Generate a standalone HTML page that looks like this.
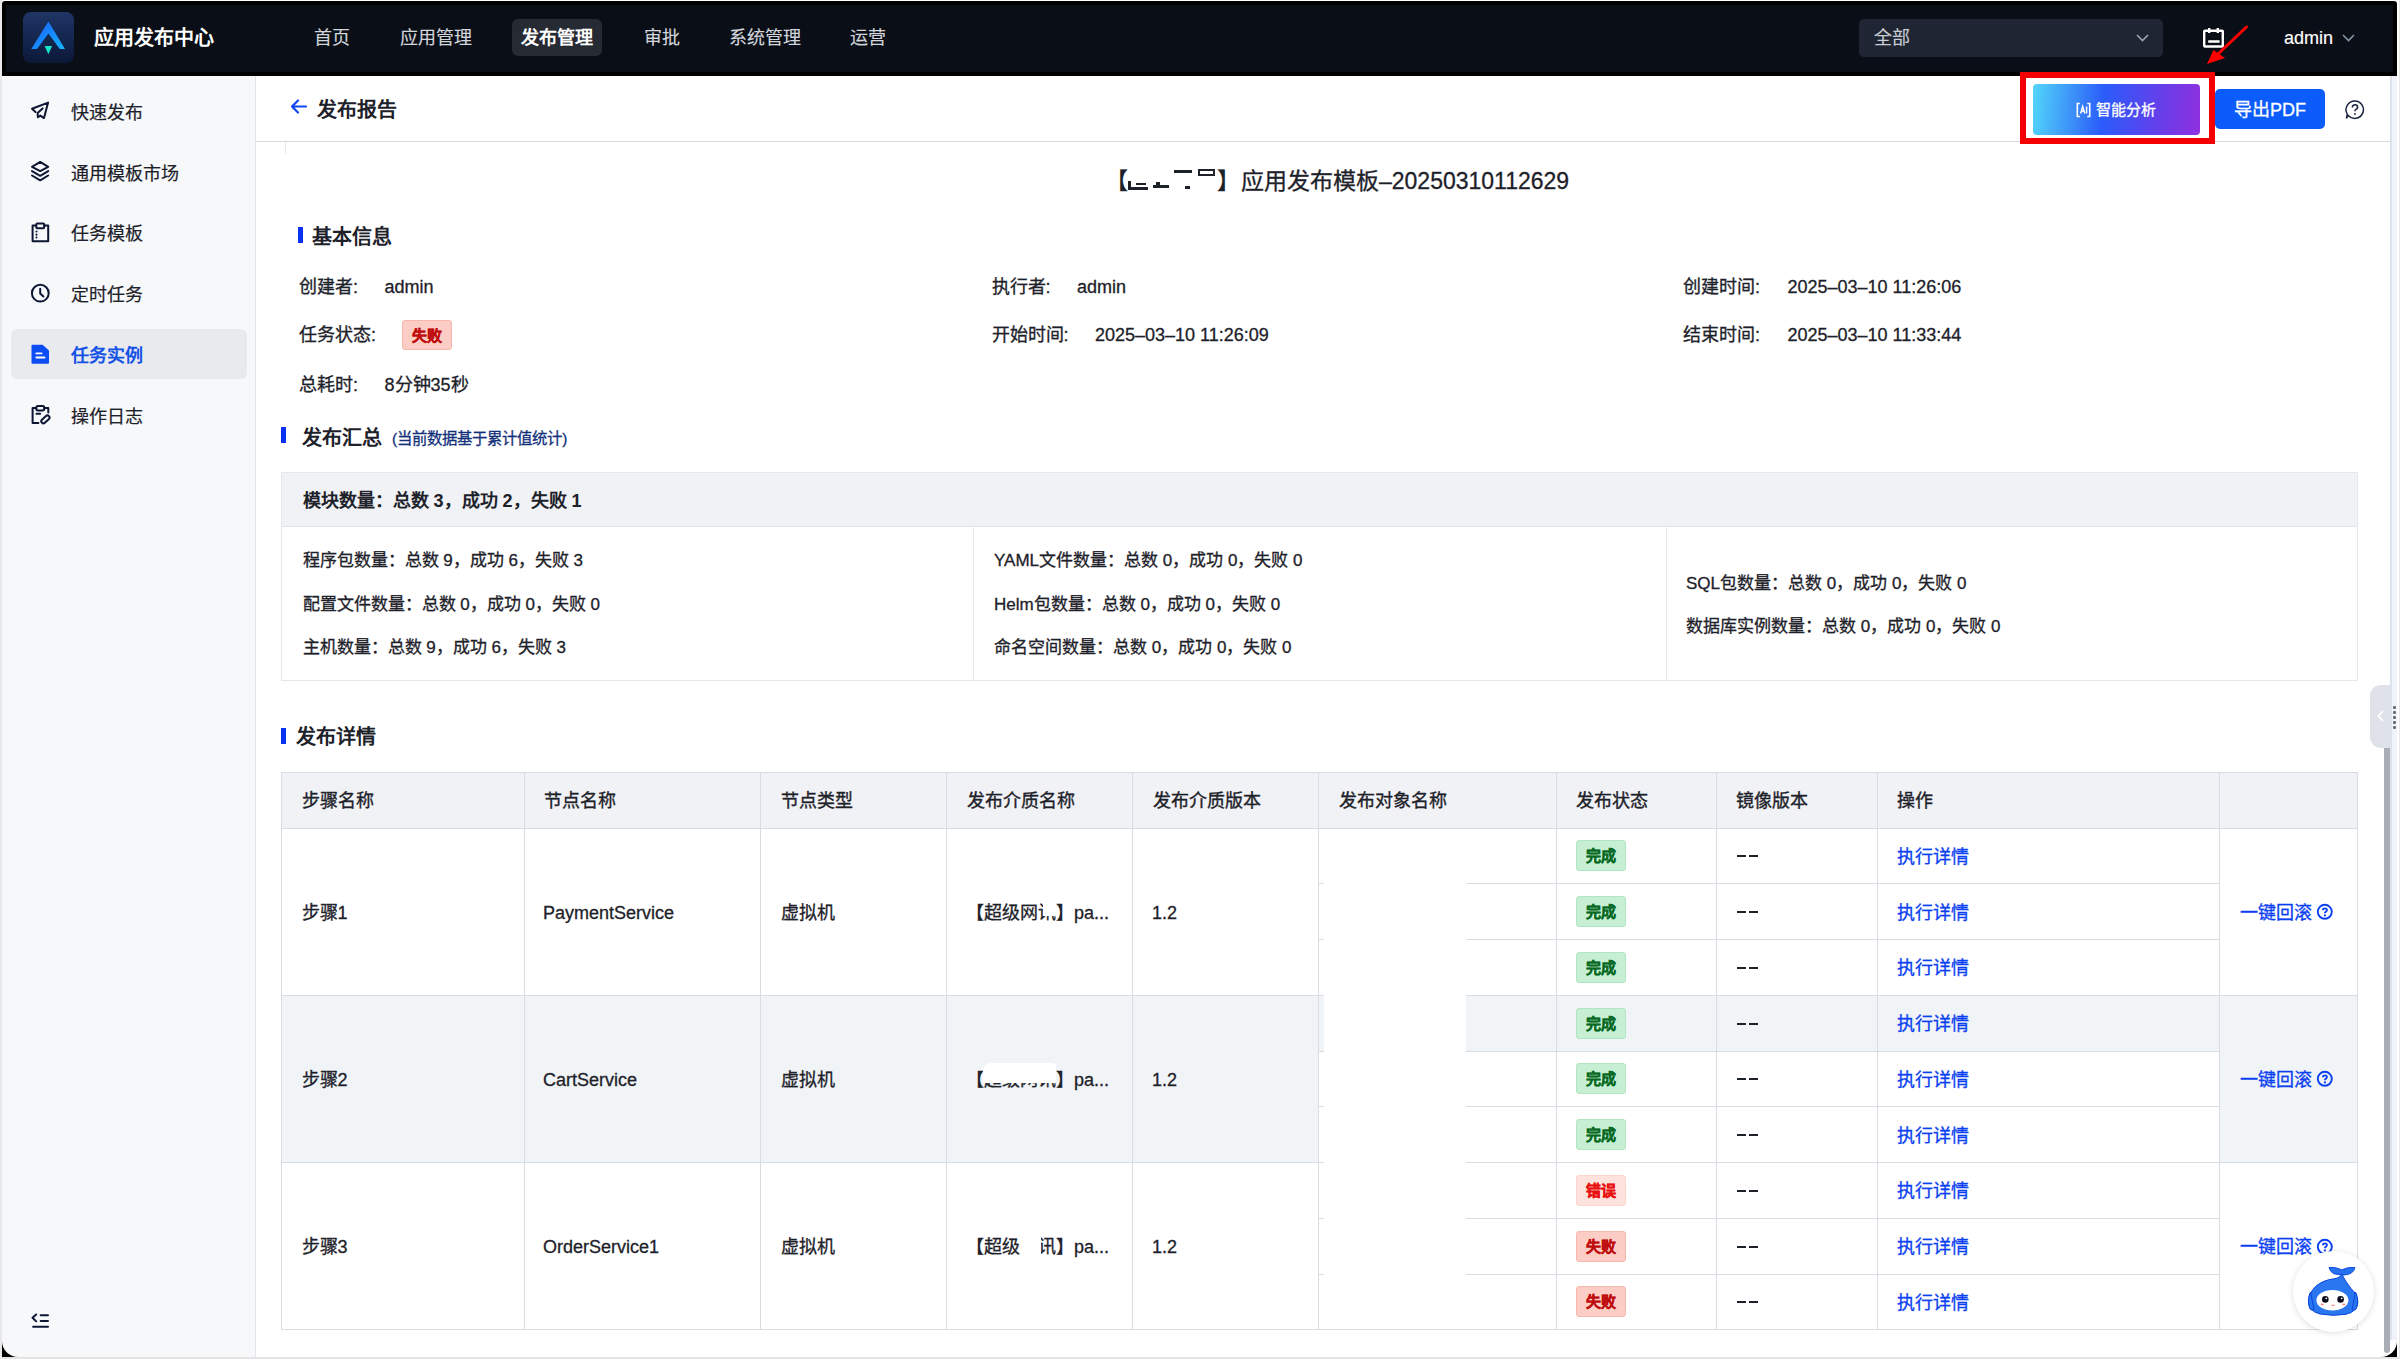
<!DOCTYPE html>
<html lang="zh-CN"><head><meta charset="utf-8">
<style>
*{margin:0;padding:0;box-sizing:border-box}
html,body{width:2400px;height:1359px;overflow:hidden;background:#fff;font-family:"Liberation Sans",sans-serif;color:#1d2129}
.a{position:absolute}
.t{position:absolute;white-space:nowrap;line-height:20px;font-size:18px;-webkit-text-stroke-width:0.3px}
.nav{position:absolute;top:28px;font-size:18px;color:#d3d6dc;line-height:20px;white-space:nowrap;-webkit-text-stroke-width:0.15px}
.si{position:absolute;left:71px;font-size:18px;color:#1d2129;line-height:20px;white-space:nowrap;-webkit-text-stroke-width:0.2px}
.ic{position:absolute;left:24px}
.h{position:absolute;white-space:nowrap;line-height:20px;font-size:18px;color:#1d2129;-webkit-text-stroke-width:0.3px}
.bar{position:absolute;width:5px;height:16px;background:#1146f0}
.sum{position:absolute;white-space:nowrap;line-height:20px;font-size:17px;color:#1d2129}
.tb{position:absolute;white-space:nowrap;line-height:20px;font-size:18px;color:#1d2129}
.bd{position:absolute;width:50px;height:30px;border-radius:3px;font-size:15px;font-weight:bold;line-height:30px;text-align:center;-webkit-text-stroke-width:0.35px}
.ok{background:#c6efd3;color:#086a24;border:1px solid #b2e6c2}
.er{background:#fde2dd;color:#e81010;border:1px solid #fbd4cc}
.fl{background:#fccdc4;color:#bf0c0c;border:1px solid #f7b8ac}
.lk{position:absolute;white-space:nowrap;line-height:20px;font-size:18px;color:#1456e6}
.hl{position:absolute;height:1px;background:#dde1e7}
.vl{position:absolute;width:1px;background:#dde1e7}
[style*="font-weight:bold"]{-webkit-text-stroke-width:0}
</style></head><body>
<!-- window frame -->
<div class="a" style="left:2px;top:1px;width:2395px;height:1356px;background:#000;border-radius:3px 3px 0 0"></div>
<div class="a" style="left:6px;top:5px;width:2387px;height:67px;background:#0a0e16"></div>
<!-- logo -->
<svg class="a" style="left:23px;top:12px" width="51" height="51" viewBox="0 0 51 51">
<defs><linearGradient id="lg" x1="0" y1="0" x2="0" y2="1"><stop offset="0" stop-color="#1f3566"/><stop offset="1" stop-color="#0b1838"/></linearGradient>
<linearGradient id="lg2" x1="0" y1="0" x2="1" y2="1"><stop offset="0" stop-color="#1a5cff"/><stop offset="1" stop-color="#14b4ff"/></linearGradient></defs>
<rect x="0" y="0" width="51" height="51" rx="8" fill="url(#lg)"/>
<path d="M25.4 9.6 L8.3 37 L14 37 L25.4 21.5 L36.8 37 L42 37 Z" fill="url(#lg2)"/>
<path d="M21.6 34 L29.1 34 L25.4 42.3 Z" fill="#19e3c8"/>
</svg>
<div class="t" style="left:94px;top:28px;font-size:20px;font-weight:bold;color:#fff">应用发布中心</div>
<div class="a" style="left:512px;top:19px;width:90px;height:37px;background:#262a33;border-radius:6px"></div>
<div class="nav" style="left:314px">首页</div>
<div class="nav" style="left:400px">应用管理</div>
<div class="nav" style="left:521px;color:#fff;font-weight:bold">发布管理</div>
<div class="nav" style="left:644px">审批</div>
<div class="nav" style="left:729px">系统管理</div>
<div class="nav" style="left:850px">运营</div>
<div class="a" style="left:1859px;top:19px;width:304px;height:38px;background:#1f2532;border-radius:5px"></div>
<div class="nav" style="left:1874px;color:#c9cdd4">全部</div>
<svg class="a" style="left:2134px;top:32px" width="17" height="12" viewBox="0 0 17 12"><path d="M3 3 L8.5 8.5 L14 3" stroke="#9aa3b2" stroke-width="1.6" fill="none"/></svg>
<svg class="a" style="left:2200px;top:26px" width="28" height="24" viewBox="0 0 28 24"><rect x="4.2" y="4.7" width="18.6" height="15.8" rx="0.8" stroke="#fff" stroke-width="2.4" fill="none"/><path d="M9.2 2 V7 M17.8 2 V7 M8.2 15.5 H19.6" stroke="#fff" stroke-width="2.4"/></svg>
<div class="nav" style="left:2284px;top:28px;color:#fff">admin</div>
<svg class="a" style="left:2340px;top:32px" width="17" height="12" viewBox="0 0 17 12"><path d="M3 3 L8.5 8.5 L14 3" stroke="#8893a6" stroke-width="1.6" fill="none"/></svg>
<!-- red arrow -->
<svg class="a" style="left:2200px;top:20px" width="56" height="50" viewBox="0 0 56 50"><path d="M46.5 7 L19 33" stroke="#f00" stroke-width="3" stroke-linecap="round"/><path d="M7 44 L13.5 30 L25 38 Z" fill="#f00"/></svg>
<!-- sidebar -->
<div class="a" style="left:2px;top:76px;width:254px;height:1281px;background:#f7f8fa;border-right:1px solid #e1e4ea;border-bottom-left-radius:16px"></div>
<div class="a" style="left:11px;top:329px;width:236px;height:50px;background:#e8eaee;border-radius:6px"></div>
<svg class="ic" style="top:96px" width="32" height="32" viewBox="0 0 32 32" fill="none" stroke="#0d1634" stroke-width="2" stroke-linejoin="round" stroke-linecap="round"><path d="M11.5 16 L8 12.8 L24.1 6.6 L20 22.1 L16.3 19.6 L13.9 21.3 L13.6 17 L18.6 12.4"/></svg>
<svg class="ic" style="top:156px" width="32" height="32" viewBox="0 0 32 32" fill="none" stroke="#0d1634" stroke-width="2" stroke-linejoin="round" stroke-linecap="round"><path d="M8 10.8 L16.2 5.9 L24.2 10.8 L16.2 15.1 Z M8 15.1 L16.2 19.8 L24.2 15.1 M8 19.5 L16.2 24.3 L24.2 19.5"/></svg>
<svg class="ic" style="top:216px" width="32" height="32" viewBox="0 0 32 32" fill="none" stroke="#0d1634" stroke-width="2" stroke-linejoin="round" stroke-linecap="round"><path d="M12.2 9.5 H8.6 V25.2 H24.2 V9.5 H20.2"/><rect x="12.3" y="7.6" width="7.9" height="4.6" rx="1"/><path d="M12.5 15.5 V15.6 M12.5 18.6 V18.7 M12.5 21.4 V21.5"/></svg>
<svg class="ic" style="top:277px" width="32" height="32" viewBox="0 0 32 32" fill="none" stroke="#0d1634" stroke-width="2" stroke-linejoin="round" stroke-linecap="round"><circle cx="16.3" cy="16.2" r="8.4"/><path d="M16.2 11.8 V16.6 L19.4 19.5"/></svg>
<svg class="ic" style="top:338px" width="32" height="32" viewBox="0 0 32 32"><path d="M8.5 6.8 H18.6 L25 12.5 V24.8 Q25 25.7 24 25.7 H8.5 Q7.5 25.7 7.5 24.7 V7.8 Q7.5 6.8 8.5 6.8 Z" fill="#0b4cf5"/><path d="M12.3 15.4 H17.6 M12.3 19.5 H20.6" stroke="#fff" stroke-width="1.8" stroke-linecap="round"/></svg>
<svg class="ic" style="top:399px" width="32" height="32" viewBox="0 0 32 32" fill="none" stroke="#0d1634" stroke-width="2" stroke-linejoin="round" stroke-linecap="round"><path d="M14.4 24 H8.6 V9 H12.4 M20.2 9 H24.3 V13.6"/><rect x="12.3" y="7" width="8" height="4.4" rx="1.6"/><path d="M12.5 14.7 H16.2"/><rect x="16.6" y="18.3" width="9.6" height="4.2" rx="2.1" transform="rotate(-42 21.4 20.4)"/></svg>
<div class="si" style="top:103px">快速发布</div>
<div class="si" style="top:164px">通用模板市场</div>
<div class="si" style="top:224px">任务模板</div>
<div class="si" style="top:285px">定时任务</div>
<div class="si" style="top:346px;color:#1553e6;font-weight:bold">任务实例</div>
<div class="si" style="top:407px">操作日志</div>
<svg class="a" style="left:24px;top:1304px" width="32" height="32" viewBox="0 0 32 32" fill="none" stroke="#0d1634" stroke-width="2" stroke-linecap="round" stroke-linejoin="round"><path d="M12.2 10.5 L8.5 13.8 L12.2 17.4 M16.7 11.2 H24 M16.7 17 H24 M9.1 22.8 H24"/></svg>

<!-- main -->
<div class="a" style="left:256px;top:76px;width:2134px;height:1281px;background:#fff"></div>
<div class="hl" style="left:256px;top:141px;width:2134px;background:#d3d8e1"></div>
<div class="vl" style="left:285px;top:142px;height:12px;background:#e4e7ec"></div>
<svg class="a" style="left:288px;top:97px" width="22" height="20" viewBox="0 0 22 20"><path d="M18 9.5 H4 M10 3.5 L4 9.5 L10 15.5" stroke="#1146f0" stroke-width="2.2" fill="none" stroke-linecap="round" stroke-linejoin="round"/></svg>
<div class="h" style="left:317px;top:100px;font-size:20px;font-weight:bold">发布报告</div>

<!-- red box + buttons -->
<div class="a" style="left:2020px;top:72px;width:195px;height:72px;border:6px solid #f50000"></div>
<div class="a" style="left:2033px;top:84px;width:167px;height:51px;border-radius:4px;background:linear-gradient(95deg,#52d6fb 0%,#3b8ef8 25%,#2b5cfb 42%,#4a4cf2 60%,#6a3de8 78%,#9030de 100%)"></div>
<svg class="a" style="left:2076px;top:102px" width="16" height="16" viewBox="0 0 16 16" fill="none" stroke="#fff" stroke-width="1.6"><path d="M3.8 1.5 H1.3 V14.5 H3.8 M11.2 1.5 H13.7 V14.5 H11.2"/><path d="M4.6 11.5 L6.7 4.5 L8.8 11.5 M5.3 9.2 H8.1 M10.6 4.5 V11.5" stroke-width="1.5"/></svg>
<div class="h" style="left:2096px;top:100px;font-size:15px;color:#fff;-webkit-text-stroke:0.3px #fff">智能分析</div>
<div class="a" style="left:2215px;top:89px;width:110px;height:40px;border-radius:5px;background:#0b5cfb"></div>
<div class="h" style="left:2234px;top:100px;color:#fff;-webkit-text-stroke:0.3px #fff">导出PDF</div>
<svg class="a" style="left:2344px;top:99px" width="22" height="22" viewBox="0 0 22 22" fill="none" stroke="#1b2440" stroke-width="1.5"><path d="M11 2 A8.7 8.7 0 1 1 4.2 16.5 L2.4 19.4 L3.3 15.2 A8.7 8.7 0 0 1 11 2 Z"/><path d="M8.4 8.6 Q8.4 5.8 11 5.8 Q13.6 5.8 13.6 8.2 Q13.6 9.6 11.9 10.4 Q11 10.9 11 12.3" stroke-width="1.6"/><circle cx="11" cy="15" r="0.9" fill="#1b2440" stroke="none"/></svg>


<div class="t" style="left:1105px;top:169.5px;font-size:23px;line-height:23px;-webkit-text-stroke:0.3px #1d2129">【</div>
<div class="t" style="left:1217px;top:169.5px;font-size:23px;line-height:23px;-webkit-text-stroke:0.3px #1d2129">】</div>
<div class="t" style="left:1241px;top:169.5px;font-size:23px;line-height:23px;-webkit-text-stroke:0.3px #1d2129">应用发布模板–20250310112629</div>
<div class="a" style="left:1128px;top:181px;width:3px;height:9px;background:#1d2129;"></div>
<div class="a" style="left:1131px;top:187px;width:17px;height:2.5px;background:#1d2129;"></div>
<div class="a" style="left:1136px;top:183px;width:10px;height:2px;background:#1d2129;"></div>
<div class="a" style="left:1153px;top:185px;width:16px;height:3px;background:#1d2129;"></div>
<div class="a" style="left:1156px;top:182px;width:4px;height:4px;background:#1d2129;"></div>
<div class="a" style="left:1174px;top:170px;width:18px;height:2.5px;background:#1d2129;"></div>
<div class="a" style="left:1198px;top:169px;width:17px;height:2px;background:#1d2129;"></div>
<div class="a" style="left:1198px;top:169px;width:2px;height:7px;background:#1d2129;"></div>
<div class="a" style="left:1213px;top:169px;width:2px;height:7px;background:#1d2129;"></div>
<div class="a" style="left:1198px;top:174px;width:17px;height:2px;background:#1d2129;"></div>
<div class="a" style="left:1185px;top:186px;width:5px;height:3px;background:#1d2129;"></div>
<div class="a" style="left:298px;top:227px;width:5px;height:16px;background:#0a30f2;"></div>
<div class="t" style="left:312px;top:227.0px;font-size:20px;line-height:20px;font-weight:bold">基本信息</div>
<div class="t" style="left:299px;top:277.0px;font-size:18px;line-height:20px">创建者:</div>
<div class="t" style="left:384.5px;top:277.0px;font-size:18px;line-height:20px">admin</div>
<div class="t" style="left:991.5px;top:277.0px;font-size:18px;line-height:20px">执行者:</div>
<div class="t" style="left:1077px;top:277.0px;font-size:18px;line-height:20px">admin</div>
<div class="t" style="left:1683px;top:277.0px;font-size:18px;line-height:20px">创建时间:</div>
<div class="t" style="left:1787.5px;top:277.0px;font-size:18px;line-height:20px">2025–03–10 11:26:06</div>
<div class="t" style="left:299px;top:325.0px;font-size:18px;line-height:20px">任务状态:</div>
<div class="t" style="left:991.5px;top:325.0px;font-size:18px;line-height:20px">开始时间:</div>
<div class="t" style="left:1095px;top:325.0px;font-size:18px;line-height:20px">2025–03–10 11:26:09</div>
<div class="t" style="left:1683px;top:325.0px;font-size:18px;line-height:20px">结束时间:</div>
<div class="t" style="left:1787.5px;top:325.0px;font-size:18px;line-height:20px">2025–03–10 11:33:44</div>
<div class="t" style="left:299px;top:375.0px;font-size:18px;line-height:20px">总耗时:</div>
<div class="t" style="left:384.5px;top:375.0px;font-size:18px;line-height:20px">8分钟35秒</div>
<div class="bd fl" style="left:402px;top:320px">失败</div>
<div class="a" style="left:281px;top:427px;width:5px;height:16px;background:#0a30f2;"></div>
<div class="t" style="left:302px;top:428.0px;font-size:20px;line-height:20px;font-weight:bold">发布汇总</div>
<div class="t" style="left:392px;top:428.5px;font-size:15.4px;line-height:20px;color:#12307a">(当前数据基于累计值统计)</div>
<div class="a" style="left:281px;top:472px;width:2077px;height:209px;border:1px solid #e4e7ec"></div>
<div class="a" style="left:282px;top:473px;width:2075px;height:53px;background:#f0f2f5;"></div>
<div class="a" style="left:282px;top:526px;width:2075px;height:1px;background:#e1e5ea;"></div>
<div class="a" style="left:973px;top:527px;width:1px;height:153px;background:#e4e7ec;"></div>
<div class="a" style="left:1666px;top:527px;width:1px;height:153px;background:#e4e7ec;"></div>
<div class="t" style="left:302.5px;top:491.0px;font-size:18px;line-height:20px;font-weight:bold">模块数量：总数 3，成功 2，失败 1</div>
<div class="t" style="left:302.5px;top:551.0px;font-size:17px;line-height:20px">程序包数量：总数 9，成功 6，失败 3</div>
<div class="t" style="left:302.5px;top:595.0px;font-size:17px;line-height:20px">配置文件数量：总数 0，成功 0，失败 0</div>
<div class="t" style="left:302.5px;top:638.0px;font-size:17px;line-height:20px">主机数量：总数 9，成功 6，失败 3</div>
<div class="t" style="left:994px;top:551.0px;font-size:17px;line-height:20px">YAML文件数量：总数 0，成功 0，失败 0</div>
<div class="t" style="left:994px;top:595.0px;font-size:17px;line-height:20px">Helm包数量：总数 0，成功 0，失败 0</div>
<div class="t" style="left:994px;top:638.0px;font-size:17px;line-height:20px">命名空间数量：总数 0，成功 0，失败 0</div>
<div class="t" style="left:1686px;top:573.5px;font-size:17px;line-height:20px">SQL包数量：总数 0，成功 0，失败 0</div>
<div class="t" style="left:1686px;top:616.5px;font-size:17px;line-height:20px">数据库实例数量：总数 0，成功 0，失败 0</div>
<div class="a" style="left:281px;top:728px;width:5px;height:16px;background:#0a30f2;"></div>
<div class="t" style="left:296px;top:727.0px;font-size:20px;line-height:20px;font-weight:bold">发布详情</div>
<div class="a" style="left:281px;top:772px;width:2076px;height:56px;background:#f0f2f5;"></div>
<div class="a" style="left:281px;top:995px;width:1037px;height:167px;background:#f1f4f6;"></div>
<div class="a" style="left:2219px;top:995px;width:138px;height:167px;background:#f1f4f6;"></div>
<div class="a" style="left:1318px;top:995px;width:901px;height:56px;background:#f1f4f6;"></div>
<div class="a" style="left:281px;top:772px;width:2077px;height:558px;border:1px solid #d8dde4"></div>
<div class="a" style="left:281px;top:828px;width:2076px;height:1px;background:#d8dde4;"></div>
<div class="a" style="left:524px;top:772px;width:1px;height:558px;background:#d8dde4;"></div>
<div class="a" style="left:760px;top:772px;width:1px;height:558px;background:#d8dde4;"></div>
<div class="a" style="left:946px;top:772px;width:1px;height:558px;background:#d8dde4;"></div>
<div class="a" style="left:1132px;top:772px;width:1px;height:558px;background:#d8dde4;"></div>
<div class="a" style="left:1318px;top:772px;width:1px;height:558px;background:#d8dde4;"></div>
<div class="a" style="left:1556px;top:772px;width:1px;height:558px;background:#d8dde4;"></div>
<div class="a" style="left:1716px;top:772px;width:1px;height:558px;background:#d8dde4;"></div>
<div class="a" style="left:1877px;top:772px;width:1px;height:558px;background:#d8dde4;"></div>
<div class="a" style="left:2219px;top:772px;width:1px;height:558px;background:#d8dde4;"></div>
<div class="a" style="left:281px;top:995px;width:2076px;height:1px;background:#d8dde4;"></div>
<div class="a" style="left:281px;top:1162px;width:2076px;height:1px;background:#d8dde4;"></div>
<div class="a" style="left:1318px;top:883px;width:901px;height:1px;background:#d8dde4;"></div>
<div class="a" style="left:1318px;top:939px;width:901px;height:1px;background:#d8dde4;"></div>
<div class="a" style="left:1318px;top:1051px;width:901px;height:1px;background:#d8dde4;"></div>
<div class="a" style="left:1318px;top:1106px;width:901px;height:1px;background:#d8dde4;"></div>
<div class="a" style="left:1318px;top:1218px;width:901px;height:1px;background:#d8dde4;"></div>
<div class="a" style="left:1318px;top:1274px;width:901px;height:1px;background:#d8dde4;"></div>
<div class="a" style="left:1324px;top:829px;width:142px;height:500px;background:#fff;"></div>
<div class="t" style="left:301.5px;top:791.0px;font-size:18px;line-height:20px;-webkit-text-stroke:0.35px #1d2129">步骤名称</div>
<div class="t" style="left:543.5px;top:791.0px;font-size:18px;line-height:20px;-webkit-text-stroke:0.35px #1d2129">节点名称</div>
<div class="t" style="left:780.5px;top:791.0px;font-size:18px;line-height:20px;-webkit-text-stroke:0.35px #1d2129">节点类型</div>
<div class="t" style="left:966.5px;top:791.0px;font-size:18px;line-height:20px;-webkit-text-stroke:0.35px #1d2129">发布介质名称</div>
<div class="t" style="left:1153px;top:791.0px;font-size:18px;line-height:20px;-webkit-text-stroke:0.35px #1d2129">发布介质版本</div>
<div class="t" style="left:1339px;top:791.0px;font-size:18px;line-height:20px;-webkit-text-stroke:0.35px #1d2129">发布对象名称</div>
<div class="t" style="left:1576px;top:791.0px;font-size:18px;line-height:20px;-webkit-text-stroke:0.35px #1d2129">发布状态</div>
<div class="t" style="left:1736px;top:791.0px;font-size:18px;line-height:20px;-webkit-text-stroke:0.35px #1d2129">镜像版本</div>
<div class="t" style="left:1897px;top:791.0px;font-size:18px;line-height:20px;-webkit-text-stroke:0.35px #1d2129">操作</div>
<div class="t" style="left:301.5px;top:902.6px;font-size:18px;line-height:20px">步骤1</div>
<div class="t" style="left:543px;top:902.6px;font-size:18px;line-height:20px">PaymentService</div>
<div class="t" style="left:780.5px;top:902.6px;font-size:18px;line-height:20px">虚拟机</div>
<div class="t" style="left:966px;top:902.6px;font-size:18px;line-height:20px">【超级网讯】pa...</div>
<div class="t" style="left:1152px;top:902.6px;font-size:18px;line-height:20px">1.2</div>
<div class="t" style="left:2239.5px;top:902.6px;font-size:18px;line-height:20px;color:#0a40f2">一键回滚</div>
<svg class="a" style="left:2316px;top:903.1px" width="18" height="18" viewBox="0 0 18 18" fill="none" stroke="#0a40f2" stroke-width="1.9"><circle cx="8.8" cy="8.8" r="7"/><path d="M6.9 7.3 Q6.9 5.4 8.9 5.4 Q10.9 5.4 10.9 7.1 Q10.9 8.2 9.7 8.8 Q8.9 9.2 8.9 10.2" stroke-width="1.9"/><circle cx="8.9" cy="12.4" r="1.1" fill="#0a40f2" stroke="none"/></svg>
<div class="t" style="left:301.5px;top:1069.9px;font-size:18px;line-height:20px">步骤2</div>
<div class="t" style="left:543px;top:1069.9px;font-size:18px;line-height:20px">CartService</div>
<div class="t" style="left:780.5px;top:1069.9px;font-size:18px;line-height:20px">虚拟机</div>
<div class="t" style="left:966px;top:1069.9px;font-size:18px;line-height:20px">【超级网讯】pa...</div>
<div class="t" style="left:1152px;top:1069.9px;font-size:18px;line-height:20px">1.2</div>
<div class="t" style="left:2239.5px;top:1069.9px;font-size:18px;line-height:20px;color:#0a40f2">一键回滚</div>
<svg class="a" style="left:2316px;top:1070.4px" width="18" height="18" viewBox="0 0 18 18" fill="none" stroke="#0a40f2" stroke-width="1.9"><circle cx="8.8" cy="8.8" r="7"/><path d="M6.9 7.3 Q6.9 5.4 8.9 5.4 Q10.9 5.4 10.9 7.1 Q10.9 8.2 9.7 8.8 Q8.9 9.2 8.9 10.2" stroke-width="1.9"/><circle cx="8.9" cy="12.4" r="1.1" fill="#0a40f2" stroke="none"/></svg>
<div class="t" style="left:301.5px;top:1237.1px;font-size:18px;line-height:20px">步骤3</div>
<div class="t" style="left:543px;top:1237.1px;font-size:18px;line-height:20px">OrderService1</div>
<div class="t" style="left:780.5px;top:1237.1px;font-size:18px;line-height:20px">虚拟机</div>
<div class="t" style="left:966px;top:1237.1px;font-size:18px;line-height:20px">【超级网讯】pa...</div>
<div class="t" style="left:1152px;top:1237.1px;font-size:18px;line-height:20px">1.2</div>
<div class="t" style="left:2239.5px;top:1237.1px;font-size:18px;line-height:20px;color:#0a40f2">一键回滚</div>
<svg class="a" style="left:2316px;top:1237.6px" width="18" height="18" viewBox="0 0 18 18" fill="none" stroke="#0a40f2" stroke-width="1.9"><circle cx="8.8" cy="8.8" r="7"/><path d="M6.9 7.3 Q6.9 5.4 8.9 5.4 Q10.9 5.4 10.9 7.1 Q10.9 8.2 9.7 8.8 Q8.9 9.2 8.9 10.2" stroke-width="1.9"/><circle cx="8.9" cy="12.4" r="1.1" fill="#0a40f2" stroke="none"/></svg>
<div class="a" style="left:1043px;top:903px;width:11px;height:13px;background:#fff;"></div>
<div class="a" style="left:983px;top:1063px;width:73px;height:20px;background:#fff;border-radius:8px 4px 2px 2px"></div>
<div class="a" style="left:1021px;top:1234px;width:20px;height:23px;background:#fff;"></div>
<div class="bd ok" style="left:1576px;top:840.4px;height:31px;line-height:29px">完成</div>
<div class="a" style="left:1737px;top:855px;width:9px;height:2px;background:#1d2129;height:2.4px"></div>
<div class="a" style="left:1748.5px;top:855px;width:9.0px;height:2px;background:#1d2129;height:2.4px"></div>
<div class="t" style="left:1897px;top:846.9px;font-size:18px;line-height:20px;color:#0a40f2">执行详情</div>
<div class="bd ok" style="left:1576px;top:896.1px;height:31px;line-height:29px">完成</div>
<div class="a" style="left:1737px;top:911px;width:9px;height:2px;background:#1d2129;height:2.4px"></div>
<div class="a" style="left:1748.5px;top:911px;width:9.0px;height:2px;background:#1d2129;height:2.4px"></div>
<div class="t" style="left:1897px;top:902.6px;font-size:18px;line-height:20px;color:#0a40f2">执行详情</div>
<div class="bd ok" style="left:1576px;top:951.9px;height:31px;line-height:29px">完成</div>
<div class="a" style="left:1737px;top:967px;width:9px;height:2px;background:#1d2129;height:2.4px"></div>
<div class="a" style="left:1748.5px;top:967px;width:9.0px;height:2px;background:#1d2129;height:2.4px"></div>
<div class="t" style="left:1897px;top:958.4px;font-size:18px;line-height:20px;color:#0a40f2">执行详情</div>
<div class="bd ok" style="left:1576px;top:1007.6px;height:31px;line-height:29px">完成</div>
<div class="a" style="left:1737px;top:1023px;width:9px;height:2px;background:#1d2129;height:2.4px"></div>
<div class="a" style="left:1748.5px;top:1023px;width:9.0px;height:2px;background:#1d2129;height:2.4px"></div>
<div class="t" style="left:1897px;top:1014.1px;font-size:18px;line-height:20px;color:#0a40f2">执行详情</div>
<div class="bd ok" style="left:1576px;top:1063.4px;height:31px;line-height:29px">完成</div>
<div class="a" style="left:1737px;top:1078px;width:9px;height:2px;background:#1d2129;height:2.4px"></div>
<div class="a" style="left:1748.5px;top:1078px;width:9.0px;height:2px;background:#1d2129;height:2.4px"></div>
<div class="t" style="left:1897px;top:1069.9px;font-size:18px;line-height:20px;color:#0a40f2">执行详情</div>
<div class="bd ok" style="left:1576px;top:1119.1px;height:31px;line-height:29px">完成</div>
<div class="a" style="left:1737px;top:1134px;width:9px;height:2px;background:#1d2129;height:2.4px"></div>
<div class="a" style="left:1748.5px;top:1134px;width:9.0px;height:2px;background:#1d2129;height:2.4px"></div>
<div class="t" style="left:1897px;top:1125.6px;font-size:18px;line-height:20px;color:#0a40f2">执行详情</div>
<div class="bd er" style="left:1576px;top:1174.9px;height:31px;line-height:29px">错误</div>
<div class="a" style="left:1737px;top:1190px;width:9px;height:2px;background:#1d2129;height:2.4px"></div>
<div class="a" style="left:1748.5px;top:1190px;width:9.0px;height:2px;background:#1d2129;height:2.4px"></div>
<div class="t" style="left:1897px;top:1181.4px;font-size:18px;line-height:20px;color:#0a40f2">执行详情</div>
<div class="bd fl" style="left:1576px;top:1230.6px;height:31px;line-height:29px">失败</div>
<div class="a" style="left:1737px;top:1246px;width:9px;height:2px;background:#1d2129;height:2.4px"></div>
<div class="a" style="left:1748.5px;top:1246px;width:9.0px;height:2px;background:#1d2129;height:2.4px"></div>
<div class="t" style="left:1897px;top:1237.1px;font-size:18px;line-height:20px;color:#0a40f2">执行详情</div>
<div class="bd fl" style="left:1576px;top:1286.4px;height:31px;line-height:29px">失败</div>
<div class="a" style="left:1737px;top:1301px;width:9px;height:2px;background:#1d2129;height:2.4px"></div>
<div class="a" style="left:1748.5px;top:1301px;width:9.0px;height:2px;background:#1d2129;height:2.4px"></div>
<div class="t" style="left:1897px;top:1292.9px;font-size:18px;line-height:20px;color:#0a40f2">执行详情</div>
<div class="a" style="left:2390px;top:76px;width:2px;height:1281px;background:#dde3ea;"></div>
<div class="a" style="left:2392px;top:76px;width:5px;height:1281px;background:#f0f4fa;"></div>
<div class="a" style="left:2384px;top:748px;width:6px;height:605px;background:#a9adb6;border-radius:0 0 3px 3px"></div>
<div class="a" style="left:2370px;top:685px;width:21px;height:63px;background:#dfe2e8;border-radius:11px 0 0 11px"></div>
<svg class="a" style="left:2374px;top:708px" width="14" height="16" viewBox="0 0 14 16"><path d="M9 3 L4.5 8 L9 13" stroke="#fff" stroke-width="1.8" fill="none"/></svg>
<div class="a" style="left:2393px;top:706px;width:3px;height:3px;background:#6b6f78;border-radius:1px"></div>
<div class="a" style="left:2393px;top:711px;width:3px;height:3px;background:#6b6f78;border-radius:1px"></div>
<div class="a" style="left:2393px;top:716px;width:3px;height:3px;background:#6b6f78;border-radius:1px"></div>
<div class="a" style="left:2393px;top:721px;width:3px;height:3px;background:#6b6f78;border-radius:1px"></div>
<div class="a" style="left:2393px;top:726px;width:3px;height:3px;background:#6b6f78;border-radius:1px"></div>
<div class="a" style="left:0px;top:1357px;width:2400px;height:2px;background:#e4e4e4;"></div>
<div class="a" style="left:0px;top:0px;width:1.5px;height:1359px;background:#e8e8e8;"></div>
<div class="a" style="left:2398.5px;top:0px;width:1.5px;height:1359px;background:#e6e6e6;"></div>
<div class="a" style="left:2380px;top:1340px;width:17px;height:17px;background:#000;"></div>
<div class="a" style="left:2380px;top:1340px;width:17px;height:17px;background:#fff;border-bottom-right-radius:16px"></div>
<div class="a" style="left:2384px;top:1330px;width:6px;height:23px;background:#a9adb6;border-radius:0 0 3px 3px"></div>
<div class="a" style="left:2293px;top:1251px;width:81px;height:81px;border-radius:50%;background:#fff;box-shadow:0 1px 6px rgba(0,0,0,0.13)"></div>
<svg class="a" style="left:2290px;top:1250px" width="90" height="85" viewBox="0 0 90 85">
<path d="M39 17.5 Q45 16.5 51.9 19.8 Q58 16.5 65 17.5 Q63.5 24.5 54 25 Q49 25 44 23.8 Q40 22 39 17.5 Z" fill="#2571ee" stroke="#0b45dc" stroke-width="0.9"/>
<path d="M51.5 23.5 Q55 31 61 38.5 Q68 45 67.8 52.5 Q67.5 61.5 56 64.3 Q43 66.5 30 64 Q18.3 61 18.6 51.5 Q19 43 25.5 36.5 Q33 30 44 28.8 Q50.5 28 51.5 23.5 Z" fill="#2a76ef" stroke="#0b45dc" stroke-width="1"/>
<path d="M20.5 42 Q16.5 50 20 59 Q22 61 24 59.5 Z" fill="#2a76ef" stroke="#0b45dc" stroke-width="1"/><path d="M65.5 42 Q69.5 50 66 59 Q64 61 62 59.5 Z" fill="#2a76ef" stroke="#0b45dc" stroke-width="1"/><ellipse cx="42.4" cy="50.3" rx="16" ry="10.2" fill="#fff"/>
<circle cx="35.3" cy="49.4" r="3.3" fill="#0a0a1a"/><circle cx="50.6" cy="49.4" r="3.3" fill="#0a0a1a"/>
<circle cx="36.3" cy="48.3" r="0.9" fill="#fff"/><circle cx="51.6" cy="48.3" r="0.9" fill="#fff"/>
<ellipse cx="32.2" cy="54.4" rx="1.6" ry="0.9" fill="#ff8a8a"/><ellipse cx="53.8" cy="54.4" rx="1.6" ry="0.9" fill="#ff8a8a"/>
<path d="M41.5 55.3 H44.8" stroke="#ff6060" stroke-width="0.9"/>
</svg>
</body></html>
